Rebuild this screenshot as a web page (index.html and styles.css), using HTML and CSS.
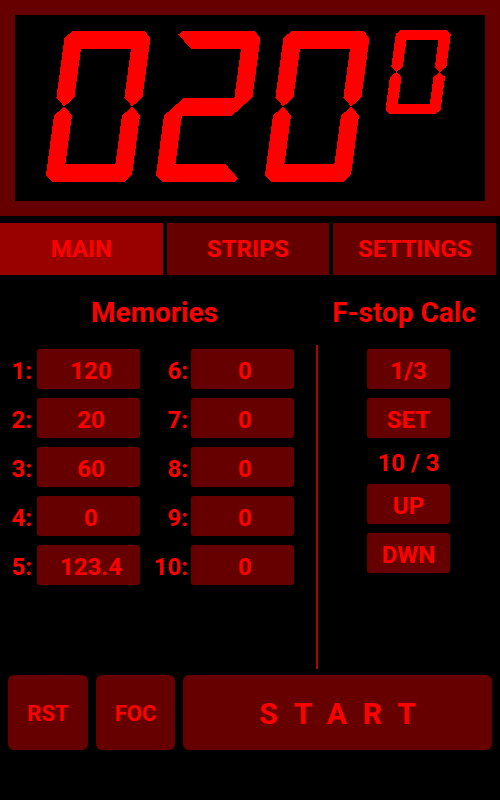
FILE: index.html
```html
<!DOCTYPE html>
<html lang="en">

<head>
  <meta charset="UTF-8">
  <meta name="viewport" content="width=device-width, initial-scale=1.0">
  <title>Enlarger Timer</title>
  <link rel="stylesheet" href="styles.css">
</head>

<body>
  <div class="display">
    <!-- seven segment readout, 020 + tenths digit -->
    <svg class="lcd" viewBox="0 0 470 186" role="img" aria-label="020.0">
      <title>020.0</title>
      <defs>
        <polygon id="seg-a" points="3.5,3.5 7,0 79,0 82.5,3.5 68,18 18,18" />
        <polygon id="seg-b" points="82.5,3.5 86,7 86,66.5 77,75.5 68,66.5 68,18" />
        <polygon id="seg-c" points="77,75.5 86,84.5 86,144 82.5,147.5 68,133 68,84.5" />
        <polygon id="seg-d" points="18,133 68,133 82.5,147.5 79,151 7,151 3.5,147.5" />
        <polygon id="seg-e" points="9,75.5 18,84.5 18,133 3.5,147.5 0,144 0,84.5" />
        <polygon id="seg-f" points="3.5,3.5 18,18 18,66.5 9,75.5 0,66.5 0,7" />
        <polygon id="seg-g" points="9,75.5 18,66.5 68,66.5 77,75.5 68,84.5 18,84.5" />
        <g id="digit-0">
          <use href="#seg-a" /><use href="#seg-b" /><use href="#seg-c" />
          <use href="#seg-d" /><use href="#seg-e" /><use href="#seg-f" />
        </g>
        <g id="digit-2">
          <use href="#seg-a" /><use href="#seg-b" /><use href="#seg-g" />
          <use href="#seg-e" /><use href="#seg-d" />
        </g>
      </defs>
      <use href="#digit-0" transform="translate(50.4 16) skewX(-7.69)" />
      <use href="#digit-2" transform="translate(160.4 16) skewX(-7.69)" />
      <use href="#digit-0" transform="translate(269.4 16) skewX(-7.69)" />
      <use href="#digit-0" transform="translate(381.3 15) skewX(-7.69) scale(0.64 0.556)" />
    </svg>
  </div>

  <nav class="tabs">
    <div class="tab active">MAIN</div>
    <div class="tab">STRIPS</div>
    <div class="tab">SETTINGS</div>
  </nav>

  <div class="headings">
    <h2 class="heading mem-heading">Memories</h2>
    <h2 class="heading calc-heading">F-stop Calc</h2>
  </div>

  <div class="panel">
    <div class="memories">
      <div class="label">1:</div><div class="value">120</div>
      <div class="label">6:</div><div class="value">0</div>
      <div class="label">2:</div><div class="value">20</div>
      <div class="label">7:</div><div class="value">0</div>
      <div class="label">3:</div><div class="value">60</div>
      <div class="label">8:</div><div class="value">0</div>
      <div class="label">4:</div><div class="value">0</div>
      <div class="label">9:</div><div class="value">0</div>
      <div class="label">5:</div><div class="value">123.4</div>
      <div class="label">10:</div><div class="value">0</div>
    </div>

    <div class="divider"></div>

    <div class="fstop">
      <div class="btn">1/3</div>
      <div class="btn">SET</div>
      <div class="ratio">10 / 3</div>
      <div class="btn">UP</div>
      <div class="btn">DWN</div>
    </div>
  </div>

  <div class="controls">
    <div class="ctl rst">RST</div>
    <div class="ctl foc">FOC</div>
    <div class="ctl start">START</div>
  </div>
</body>

</html>
```

FILE: styles.css
```css
* {
  box-sizing: border-box;
}

body {
  margin: 0;
  background-color: #000;
  color: #ff0000;
  font-family: Roboto, 'Liberation Sans', sans-serif;
  font-weight: bold;
}

/* readout */
.display {
  background-color: #660000;
  padding: 15px;
}

.lcd {
  display: block;
  width: 470px;
  height: 186px;
  background-color: #000;
  fill: #ff0000;
  shape-rendering: crispEdges;
}

/* tabs */
.tabs {
  display: flex;
  gap: 4px;
  height: 52px;
  margin-top: 7px;
  padding-right: 4px;
}

.tab {
  flex: 1;
  display: flex;
  align-items: center;
  justify-content: center;
  background-color: #660000;
  font-size: 24px;
}

.tab.active {
  background-color: #990000;
}

/* section titles */
.headings {
  display: flex;
  align-items: center;
  height: 70px;
  padding-top: 4px;
}

.heading {
  margin: 0;
  font-size: 28px;
  text-align: center;
}

.mem-heading {
  width: 316px;
  padding-right: 7px;
}

.calc-heading {
  flex: 1;
  padding-right: 8px;
}

/* memories + calc */
.panel {
  display: flex;
  height: 324px;
}

.memories {
  width: 316px;
  padding-top: 4px;
  display: grid;
  grid-template-columns: 37px 103px 51px 103px;
  grid-auto-rows: 40px;
  row-gap: 9px;
  align-content: start;
  font-size: 24px;
}

.label {
  text-align: right;
  padding: 4px 3px 0 0;
  line-height: 36px;
}

.label:nth-child(4n+1) {
  padding-right: 5px;
}

.value {
  background-color: #660000;
  border-radius: 3px;
  text-align: center;
  padding: 4px 0 0 5px;
  line-height: 36px;
}

.divider {
  width: 2px;
  background-color: #b30000;
}

.fstop {
  flex: 1;
  display: flex;
  flex-direction: column;
  align-items: center;
  gap: 9px;
  padding: 4px 1px 0 0;
  font-size: 24px;
}

.btn {
  width: 83px;
  height: 40px;
  background-color: #660000;
  border-radius: 3px;
  text-align: center;
  padding-top: 4px;
  line-height: 36px;
}

.ratio {
  height: 28px;
  padding-top: 4px;
  line-height: 24px;
}

/* bottom buttons */
.controls {
  display: flex;
  gap: 8px;
  height: 75px;
  margin-top: 6px;
  padding: 0 8px;
}

.ctl {
  display: flex;
  align-items: center;
  justify-content: center;
  background-color: #660000;
  border-radius: 6px;
  font-size: 22px;
  padding-top: 2px;
}

.rst {
  width: 80px;
}

.foc {
  width: 79px;
}

.start {
  flex: 1;
  font-size: 30px;
  letter-spacing: 16px;
  padding-left: 16px;
}
```
